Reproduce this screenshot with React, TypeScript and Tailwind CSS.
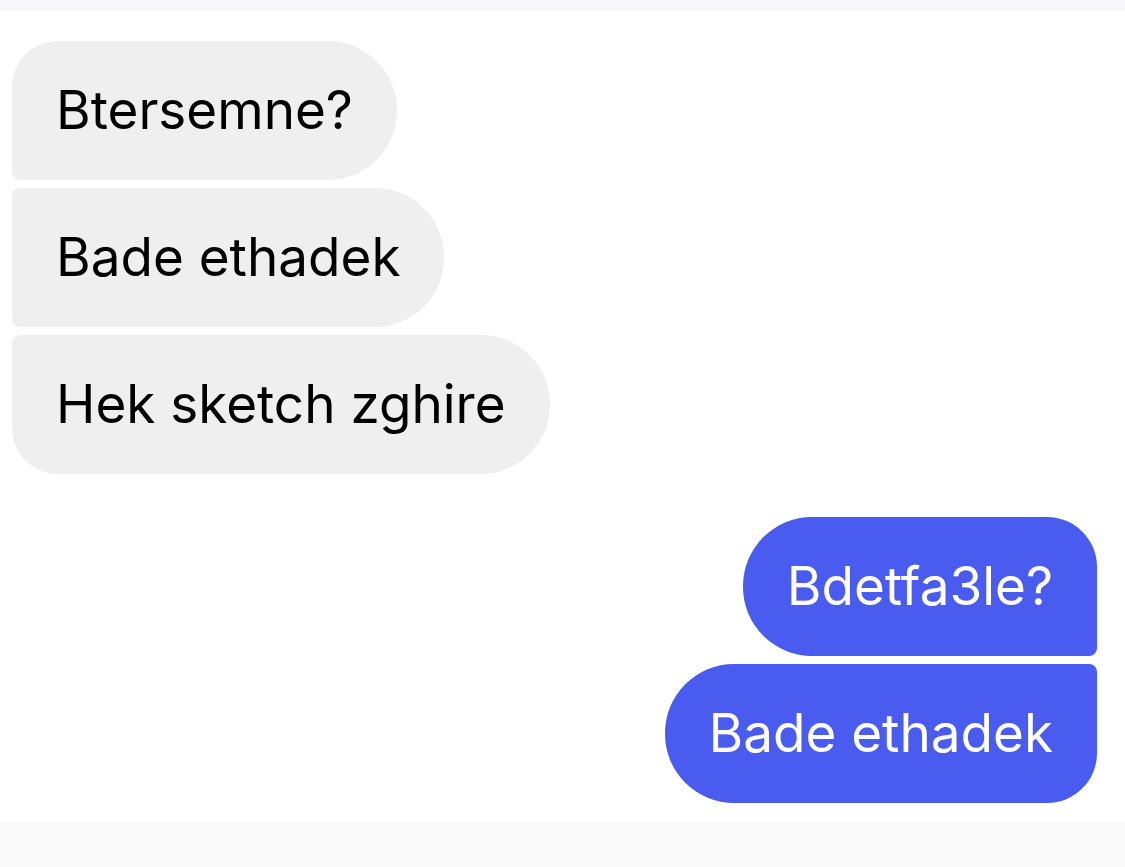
const incoming = [
  { text: 'Btersemne?', shape: 'rounded-[69px] rounded-tl-[46px] rounded-bl-[8px]' },
  { text: 'Bade ethadek', shape: 'rounded-[69px] rounded-tl-[8px] rounded-bl-[8px]' },
  { text: 'Hek sketch zghire', shape: 'rounded-[69px] rounded-tl-[8px] rounded-bl-[46px]' },
];

const outgoing = [
  { text: 'Bdetfa3le?', shape: 'rounded-[69px] rounded-tr-[50px] rounded-br-[8px]' },
  { text: 'Bade ethadek', shape: 'rounded-[69px] rounded-tr-[8px] rounded-br-[50px]' },
];

export default function App() {
  return (
    <div
      className="flex h-[867px] w-[1125px] flex-col bg-white"
      style={{ fontFamily: 'Inter, "Noto Sans", sans-serif' }}
    >
      <div className="h-[11px] bg-[#f8f8fa]" />

      <div className="flex flex-1 flex-col pt-[30px]">
        <div className="flex flex-col items-start gap-[8px] pl-[12px]">
          {incoming.map((m) => (
            <div
              key={m.text}
              className={`flex h-[139px] items-center bg-[#efefef] px-[44px] text-[53px] leading-none text-black ${m.shape}`}
            >
              {m.text}
            </div>
          ))}
        </div>

        <div className="mt-[43px] flex flex-col items-end gap-[8px] pr-[28px]">
          {outgoing.map((m) => (
            <div
              key={m.text}
              className={`flex h-[139px] items-center bg-[#4a5bef] px-[44px] text-[53px] leading-none text-white ${m.shape}`}
            >
              {m.text}
            </div>
          ))}
        </div>
      </div>

      <div className="h-[45px] bg-[#f9f9f9]" />
    </div>
  );
}
